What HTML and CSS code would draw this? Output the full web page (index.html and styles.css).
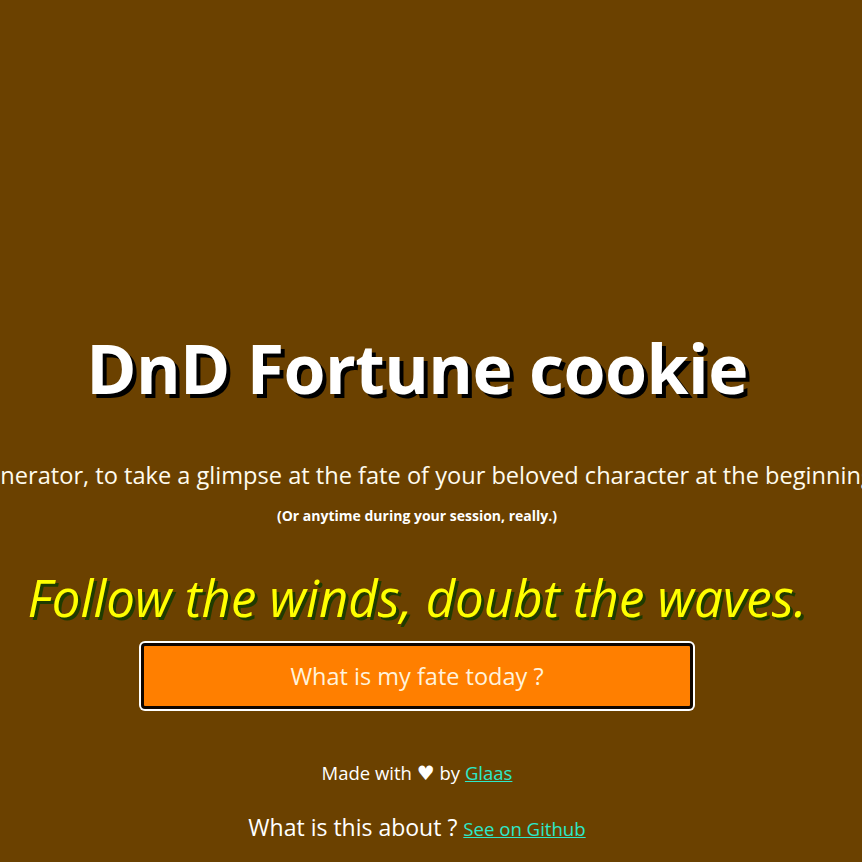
FILE: index.html
```html
<!DOCTYPE html>
<html lang="en">
<head>
<meta charset="utf-8">
<title>DnD Fortune cookie</title>
<link rel="stylesheet" href="styles.css">
</head>
<body>
<main class="page">
  <h1 class="title">DnD Fortune cookie</h1>
  <p class="intro">A fortune cookie generator, to take a glimpse at the fate of your beloved character at the beginning of a new game.</p>
  <p class="aside">(Or anytime during your session, really.)</p>
  <p class="fortune">Follow the winds, doubt the waves.</p>
  <button class="fate-btn" type="button">What is my fate today ?</button>
  <p class="made">Made with <span class="heart">&#9829;</span> by <a href="#">Glaas</a></p>
  <p class="about">What is this about ? <a href="#">See on Github</a></p>
</main>
</body>
</html>
```
FILE: styles.css
```css
html, body {
  margin: 0;
  padding: 0;
  background: #6b4100;
  overflow: hidden;
}
body {
  font-family: "Open Sans", "DejaVu Sans", sans-serif;
  color: #ffffff;
}
.page {
  width: 834px;
  height: 862px;
  display: flex;
  flex-direction: column;
  align-items: center;
  padding-top: 328px;
  box-sizing: border-box;
}
.title {
  margin: 0;
  font-size: 68px;
  font-weight: 700;
  line-height: 80px;
  text-shadow: 4px 4px 0 #000;
  white-space: nowrap;
  letter-spacing: -0.6px;
}
.intro {
  margin: 52px 0 0;
  font-size: 23.6px;
  line-height: 30px;
  white-space: nowrap;
  color: #fffbee;
}
.aside {
  margin: 17px 0 0;
  font-size: 14px;
  font-weight: 700;
  line-height: 18px;
}
.fortune {
  margin: 42px 0 0;
  font-size: 51px;
  font-style: italic;
  line-height: 60px;
  color: #ffff00;
  text-shadow: 3px 3px 0 #1e3b00;
  white-space: nowrap;
}
.fate-btn {
  margin-top: 16px;
  width: 552px;
  height: 66px;
  background: #ff7f00;
  border: 3px solid #0d0500;
  border-radius: 4px;
  box-shadow: 0 0 0 2px #ffffff;
  color: #fff3dc;
  font-family: inherit;
  font-size: 23.5px;
}
.made {
  margin: 52px 0 0;
  font-size: 18.5px;
  font-weight: 500;
  line-height: 24px;
}
.heart {
  font-size: 20px;
}
.about {
  margin: 28px 0 0;
  font-size: 23px;
  line-height: 28px;
}
.about a {
  font-size: 18.6px;
}
a {
  color: #2de8c8;
  text-decoration: underline;
}
```
